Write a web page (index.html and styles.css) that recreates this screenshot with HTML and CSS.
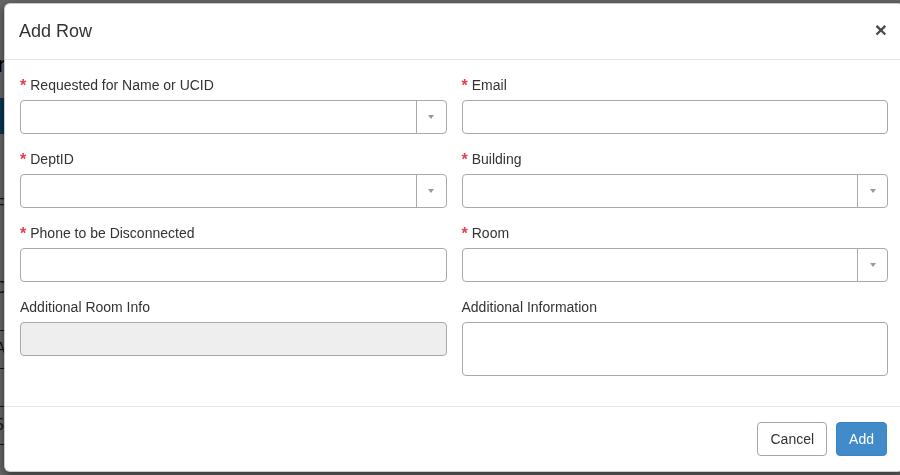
FILE: index.html
```html
<!DOCTYPE html>
<html lang="en">
<head>
<meta charset="utf-8">
<title>Add Row</title>
<link rel="stylesheet" href="styles.css">
</head>
<body>
<div class="page">
  <h2 class="page-title">Phone Disconnection</h2>
  <div class="page-bar">Requestor</div>
  <p class="page-line">Form of request</p>
  <p class="page-line">Contact</p>
  <table class="page-table">
    <tr><td>A</td></tr>
    <tr><td>&nbsp;</td></tr>
    <tr><td>5</td></tr>
    <tr><td>&nbsp;</td></tr>
  </table>
  <p class="page-email">tommy.nie@ucsd.edu</p>
</div>

<div class="backdrop"></div>

<div class="modal" role="dialog">
  <div class="modal-header">
    <h4 class="modal-title">Add Row</h4>
    <button class="close" type="button">&times;</button>
  </div>
  <div class="modal-body">
    <div class="form-grid">
      <div class="form-group">
        <label class="label required">Requested for Name or UCID</label>
        <div class="select"><span class="select-value"></span><span class="select-arrow"><span class="caret"></span></span></div>
      </div>
      <div class="form-group">
        <label class="label required">Email</label>
        <div class="input"></div>
      </div>
      <div class="form-group">
        <label class="label required">DeptID</label>
        <div class="select"><span class="select-value"></span><span class="select-arrow"><span class="caret"></span></span></div>
      </div>
      <div class="form-group">
        <label class="label required">Building</label>
        <div class="select"><span class="select-value"></span><span class="select-arrow"><span class="caret"></span></span></div>
      </div>
      <div class="form-group">
        <label class="label required">Phone to be Disconnected</label>
        <div class="input"></div>
      </div>
      <div class="form-group">
        <label class="label required">Room</label>
        <div class="select"><span class="select-value"></span><span class="select-arrow"><span class="caret"></span></span></div>
      </div>
      <div class="form-group">
        <label class="label">Additional Room Info</label>
        <div class="input disabled"></div>
      </div>
      <div class="form-group">
        <label class="label">Additional Information</label>
        <div class="input textarea"></div>
      </div>
    </div>
  </div>
  <div class="modal-footer">
    <button class="btn btn-default" type="button">Cancel</button>
    <button class="btn btn-primary" type="button">Add</button>
  </div>
</div>
</body>
</html>
```
FILE: styles.css
```css
* { box-sizing: border-box; }

html, body {
  margin: 0;
  padding: 0;
  height: 100%;
  overflow: hidden;
}

body {
  background: #ffffff;
  font-family: "Liberation Sans", Arial, sans-serif;
  font-size: 14px;
  line-height: 1.42857;
  color: #333333;
}

/* page behind the dialog */
.page {
  margin-left: -150px;
  padding-top: 50px;
  width: 1000px;
  height: 475px;
  overflow: hidden;
}
.page-title {
  margin: 0 0 18px 0;
  font-size: 22px;
  line-height: 30px;
  font-weight: bold;
  color: #000;
}
.page-bar {
  height: 36px;
  background: #1c86cc;
  color: #fff;
  padding: 8px 0 0 80px;
}
.page-line {
  margin: 60px 0 0 0;
  font-size: 16px;
  padding-left: 145px;
}
.page-table {
  margin-top: 30px;
  border-collapse: collapse;
  width: 100%;
}
.page-table td {
  border-top: 1px solid #333;
  height: 38px;
  padding-left: 145px;
  font-size: 16px;
}
.page-email {
  margin: 6px 0 0 0;
  padding-left: 150px;
  font-size: 16px;
  color: #000;
}

.backdrop {
  position: fixed;
  inset: 0;
  background: rgba(0, 0, 0, 0.6);
}

/* dialog */
.modal {
  position: absolute;
  left: 4px;
  top: 3px;
  width: 900px;
  background: #ffffff;
  border: 1px solid rgba(0, 0, 0, 0.2);
  border-radius: 6px;
  box-shadow: 0 3px 9px rgba(0, 0, 0, 0.5);
}

.modal-header {
  display: flex;
  align-items: flex-start;
  justify-content: space-between;
  padding: 15px 16px 15px 14px;
  border-bottom: 1px solid #e5e5e5;
}
.modal-title {
  margin: 0;
  font-size: 18px;
  font-weight: normal;
  line-height: 25px;
  color: #333333;
}
.close {
  margin: 0;
  padding: 0;
  border: 0;
  background: transparent;
  font-family: "Liberation Sans", Arial, sans-serif;
  font-size: 21px;
  font-weight: bold;
  line-height: 21px;
  color: #4a4a4a;
  cursor: pointer;
}

.modal-body {
  padding: 15px;
}
.form-grid {
  display: grid;
  grid-template-columns: 1fr 1fr;
  column-gap: 15px;
  align-items: start;
}
.form-group {
  margin-bottom: 15px;
}
.label {
  display: block;
  margin-bottom: 5px;
  font-size: 14px;
  line-height: 20px;
  font-weight: normal;
  color: #333333;
}
.label.required::before {
  content: "*";
  color: #e2404f;
  font-weight: bold;
  font-size: 16px;
  margin-right: 4px;
  position: relative;
  top: 1px;
}

.input,
.select {
  height: 34px;
  border: 1px solid #a9a9a9;
  border-radius: 4px;
  background: #ffffff;
}
.input.disabled {
  background: #eeeeee;
}
.input.textarea {
  height: 54px;
}
.select {
  display: flex;
}
.select-value {
  flex: 1;
}
.select-arrow {
  width: 30px;
  border-left: 1px solid #a9a9a9;
  display: flex;
  align-items: center;
  justify-content: center;
}
.caret {
  width: 0;
  height: 0;
  border-top: 4px solid #999999;
  border-left: 3.5px solid transparent;
  border-right: 3.5px solid transparent;
}

.modal-footer {
  display: flex;
  justify-content: flex-end;
  gap: 9px;
  padding: 15px 16px 15px 15px;
  border-top: 1px solid #e5e5e5;
}
.btn {
  height: 34px;
  padding: 6px 12px;
  font-family: "Liberation Sans", Arial, sans-serif;
  font-size: 14px;
  line-height: 20px;
  border-radius: 4px;
  border: 1px solid transparent;
  cursor: pointer;
}
.btn-default {
  background: #ffffff;
  color: #333333;
  border-color: #a6a6a6;
}
.btn-primary {
  background: #428bca;
  color: #ffffff;
  border-color: #3c83c2;
}
```
